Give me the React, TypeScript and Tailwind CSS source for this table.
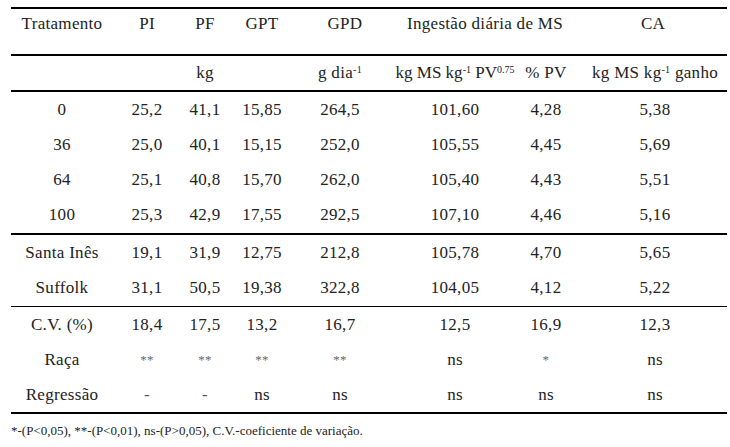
const cols = "grid grid-cols-[102px_68px_48px_66px_90px_140px_42px_160px]";

type Row = [string, string, string, string, string, string, string, string];

const doses: Row[] = [
  ["0", "25,2", "41,1", "15,85", "264,5", "101,60", "4,28", "5,38"],
  ["36", "25,0", "40,1", "15,15", "252,0", "105,55", "4,45", "5,69"],
  ["64", "25,1", "40,8", "15,70", "262,0", "105,40", "4,43", "5,51"],
  ["100", "25,3", "42,9", "17,55", "292,5", "107,10", "4,46", "5,16"],
];

const racas: Row[] = [
  ["Santa Inês", "19,1", "31,9", "12,75", "212,8", "105,78", "4,70", "5,65"],
  ["Suffolk", "31,1", "50,5", "19,38", "322,8", "104,05", "4,12", "5,22"],
];

const stats: Row[] = [
  ["C.V. (%)", "18,4", "17,5", "13,2", "16,7", "12,5", "16,9", "12,3"],
  ["Raça", "**", "**", "**", "**", "ns", "*", "ns"],
  ["Regressão", "-", "-", "ns", "ns", "ns", "ns", "ns"],
];

function DataRow({ row, h }: { row: Row; h: string }) {
  return (
    <div className={`${cols} ${h} items-center text-center leading-[24px]`}>
      {row.map((cell, i) => {
        const stars = cell.startsWith("*");
        return (
          <span
            key={i}
            className={`${i === 7 ? "pl-[16px]" : ""} ${stars ? "text-[13px] text-[#666]" : ""} ${cell === "-" ? "text-[#555]" : ""}`}
          >
            {cell}
          </span>
        );
      })}
    </div>
  );
}

export default function App() {
  return (
    <div className="h-[447px] w-[730px] bg-white pl-[11px] pt-[7px] font-['Liberation_Serif',serif] text-[17px] tracking-[0.3px] text-[#222]">
      <div className="w-[716px] border-t-2 border-black">
        {/* header */}
        <div className={`${cols} h-[47px] items-start border-b-2 border-black pt-[3px] text-center leading-[24px]`}>
          <span>Tratamento</span>
          <span>PI</span>
          <span>PF</span>
          <span>GPT</span>
          <span className="pl-[10px]">GPD</span>
          <span className="col-span-2 pl-[18px]">Ingestão diária de MS</span>
          <span className="pl-[12px]">CA</span>
        </div>

        {/* units */}
        <div className={`${cols} h-[36px] items-center border-b-2 border-black text-center leading-[24px]`}>
          <span />
          <span />
          <span>kg</span>
          <span />
          <span>
            g dia<sup className="text-[10px]">-1</sup>
          </span>
          <span className="whitespace-nowrap tracking-normal">
            kg MS kg<sup className="text-[10px]">-1</sup> PV<sup className="text-[10px]">0.75</sup>
          </span>
          <span className="whitespace-nowrap">% PV</span>
          <span className="whitespace-nowrap pl-[16px]">
            kg MS kg<sup className="text-[10px]">-1</sup> ganho
          </span>
        </div>

        <div className="border-b-2 border-black">
          {doses.map((r, i) => (
            <DataRow key={r[0]} row={r} h={i === 3 ? "h-[36px]" : "h-[35px]"} />
          ))}
        </div>

        <div className="border-b border-black">
          {racas.map((r, i) => (
            <DataRow key={r[0]} row={r} h={i === 1 ? "h-[36px]" : "h-[35px]"} />
          ))}
        </div>

        <div className="border-b-2 border-black">
          {stats.map((r) => (
            <DataRow key={r[0]} row={r} h="h-[35px]" />
          ))}
        </div>
      </div>
      <p className="mt-[8px] text-[13px] leading-[18px] tracking-normal">
        *-(P&lt;0,05), **-(P&lt;0,01), ns-(P&gt;0,05), C.V.-coeficiente de variação.
      </p>
    </div>
  );
}
